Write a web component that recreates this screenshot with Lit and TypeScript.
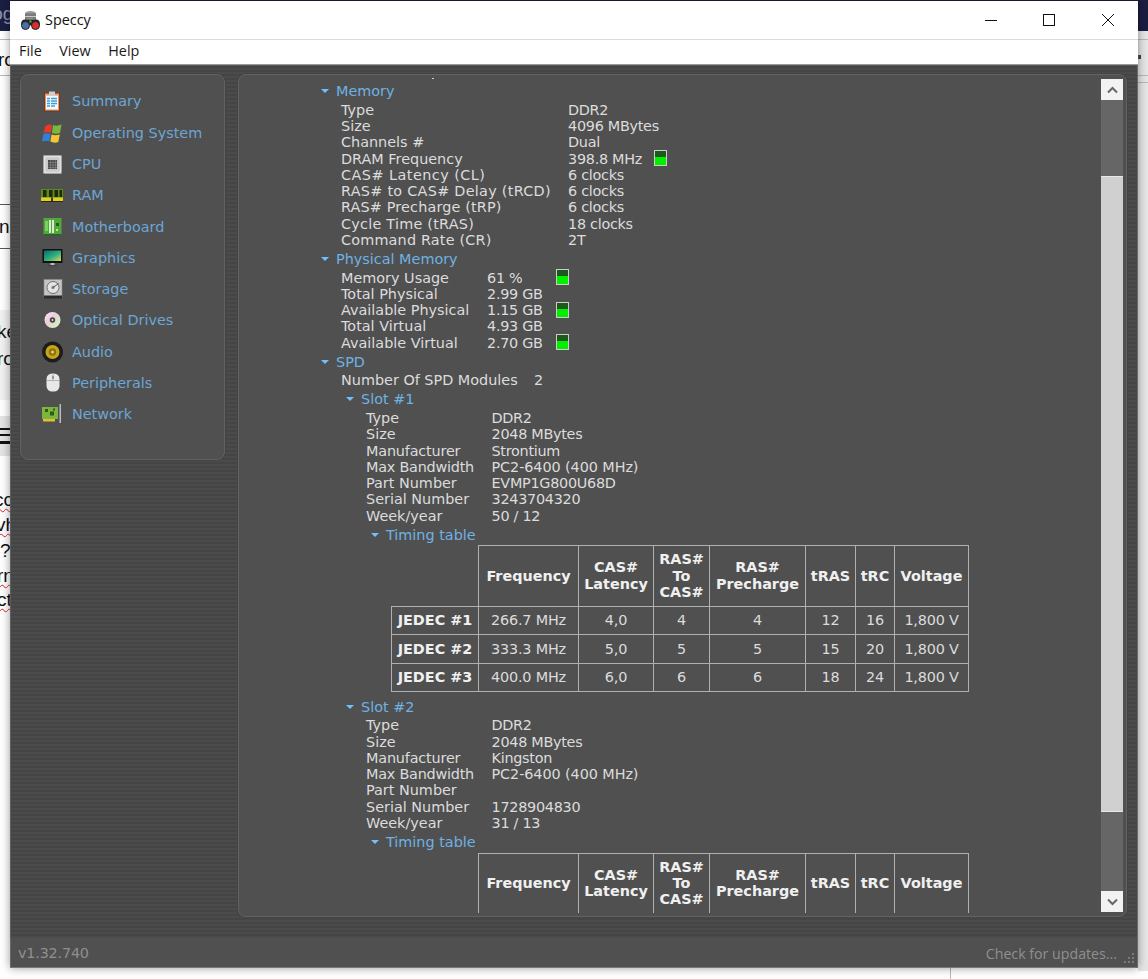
import { LitElement, html, css, svg } from "lit";
import { customElement } from "lit/decorators.js";

const icons: Record<string, unknown> = {
  summary: svg`<rect x="2.500" y="2" width="15" height="18" fill="#e8935a" stroke="#6a3018" stroke-width=".8"/><rect x="4" y="4.500" width="12" height="14" fill="#f4f8fb"/><rect x="7" y="0.500" width="6" height="3.500" fill="#c8d0d6"/><path d="M5 7.500h3M9 7.500h6M5 10h3M9 10h6M5 12.500h3M9 12.500h6M5 15h3M9 15h4" stroke="#39a0e0" stroke-width="1.400"/>`,
  os: svg`<path d="M3 3.500q4-3 7-1.500l-1.200 8q-3.500-1.500-7.300 0z" fill="#e8392a"/><path d="M11 2q4 1.500 8.500-.5l-1.500 8.500q-4 1.500-8 0z" fill="#7ab83a"/><path d="M1.300 11q3.700-1.500 7.200 0l-1.200 7.500q-3.500-1.500-7.300 0z" fill="#2f80d8"/><path d="M9.500 11.500q4 1.500 8.300 0l-1.500 7.500q-4 1.500-8-.5z" fill="#f6c531"/>`,
  cpu: svg`<rect x="1.500" y="1.500" width="18" height="18" fill="#c9c9c9" stroke="#8a8a8a" stroke-width=".8"/><rect x="2.500" y="2.500" width="16" height="16" fill="none" stroke="#f4f4f4" stroke-width="2" stroke-dasharray="1 1"/><rect x="6" y="6" width="9" height="9" fill="#4a4a4a"/><path d="M6 8.500h9M6 11h9M6 13.500h9M8.500 6v9M11 6v9M13.500 6v9" stroke="#8a8a8a" stroke-width=".6"/>`,
  ram: svg`<rect x="-1" y="4" width="22" height="9" fill="#5d8a18"/><rect x="-1" y="12.500" width="22" height="3.500" fill="#e0d020"/><path d="M1 5h3.500v7H1zM7 5h3.500v7H7zM12.500 5H16v7h-3.500zM17.500 5H20v7h-2.500z" fill="#1e2a10"/><rect x="9" y="12.500" width="2" height="3.500" fill="#333"/><rect x="-1" y="16" width="22" height="1" fill="#2a2a10"/>`,
  board: svg`<rect x="1.500" y="1" width="18" height="17" fill="#52a83a"/><rect x="1.500" y="17" width="18" height="1.500" fill="#1f6a22"/><rect x="7" y="3" width="2" height="13" fill="#d8ecd0"/><rect x="10" y="3" width="2" height="13" fill="#d8ecd0"/><rect x="3" y="4" width="3" height="10" fill="#7ccf60"/><rect x="14" y="6" width="3" height="3" fill="#245f22"/><rect x="14" y="12" width="2" height="2" fill="#b8e8a0"/>`,
  gfx: svg`<rect x="0.500" y="1" width="20" height="14" fill="#111"/><defs><linearGradient id="sc" x1="0" y1="0" x2="1" y2="1"><stop offset="0" stop-color="#0a6a70"/><stop offset=".55" stop-color="#30b080"/><stop offset="1" stop-color="#d8d850"/></linearGradient></defs><rect x="2" y="2.500" width="17" height="10.500" fill="url(#sc)"/><rect x="8.500" y="15" width="4" height="2" fill="#bbb"/><rect x="5.500" y="17" width="10" height="1.500" fill="#444"/>`,
  hdd: svg`<rect x="2" y="0.500" width="18" height="18" fill="#c4c4c4" stroke="#8c8c8c" stroke-width=".6"/><circle cx="11" cy="8.500" r="6" fill="#e4e4e4" stroke="#6e6e6e"/><circle cx="11" cy="8.500" r="1.700" fill="#888"/><path d="M11 8.500 16.500 4.500" stroke="#555"/><rect x="2" y="16.500" width="18" height="3" fill="#2c2c2c"/>`,
  cd: svg`<defs><linearGradient id="cdg" x1="0" y1="0" x2="1" y2="1"><stop offset="0" stop-color="#f4f4f4"/><stop offset=".4" stop-color="#eec8e0"/><stop offset=".7" stop-color="#d8e8c0"/><stop offset="1" stop-color="#e8e8e8"/></linearGradient></defs><circle cx="10.500" cy="10" r="8" fill="url(#cdg)"/><circle cx="10.500" cy="10" r="2.700" fill="#444"/><circle cx="10.500" cy="10" r="1" fill="#ddd"/>`,
  audio: svg`<circle cx="10.500" cy="10" r="10.500" fill="#1c1c1c"/><circle cx="10.500" cy="10" r="7" fill="#c9a318"/><circle cx="10.500" cy="10" r="3.700" fill="#8c7210"/><circle cx="10.500" cy="10" r="1.500" fill="#e9d060"/>`,
  mouse: svg`<rect x="4.500" y="0.500" width="13" height="18" rx="5.500" fill="#e8e8e8"/><path d="M11 1v6M4.800 7.500h12.400" stroke="#9a9a9a" stroke-width=".7"/><rect x="10.200" y="3" width="1.600" height="3" fill="#8a8a8a"/>`,
  net: svg`<rect x="0" y="3" width="16" height="12" fill="#7cb63c"/><rect x="3" y="5" width="3" height="3" fill="#2d5a20"/><rect x="8" y="7.500" width="4" height="4" fill="#2d5a20"/><rect x="11" y="4.500" width="2" height="2" fill="#2d5a20"/><rect x="1" y="15" width="12" height="2.500" fill="#e0c030"/><rect x="17.500" y="0" width="1.500" height="19" fill="#bdbdbd"/>`,
};

const NAV: [string, string][] = [
  ["summary", "Summary"], ["os", "Operating System"], ["cpu", "CPU"], ["ram", "RAM"],
  ["board", "Motherboard"], ["gfx", "Graphics"], ["hdd", "Storage"], ["cd", "Optical Drives"],
  ["audio", "Audio"], ["mouse", "Peripherals"], ["net", "Network"],
];

const MEMORY: [string, string, boolean?][] = [
  ["Type", "DDR2"], ["Size", "4096 MBytes"], ["Channels #", "Dual"],
  ["DRAM Frequency", "398.8 MHz", true], ["CAS# Latency (CL)", "6 clocks"],
  ["RAS# to CAS# Delay (tRCD)", "6 clocks"], ["RAS# Precharge (tRP)", "6 clocks"],
  ["Cycle Time (tRAS)", "18 clocks"], ["Command Rate (CR)", "2T"],
];
const PHYS: [string, string, boolean?][] = [
  ["Memory Usage", "61 %", true], ["Total Physical", "2.99 GB"],
  ["Available Physical", "1.15 GB", true], ["Total Virtual", "4.93 GB"],
  ["Available Virtual", "2.70 GB", true],
];
const SLOT1: [string, string][] = [
  ["Type", "DDR2"], ["Size", "2048 MBytes"], ["Manufacturer", "Strontium"],
  ["Max Bandwidth", "PC2-6400 (400 MHz)"], ["Part Number", "EVMP1G800U68D"],
  ["Serial Number", "3243704320"], ["Week/year", "50 / 12"],
];
const SLOT2: [string, string][] = [
  ["Type", "DDR2"], ["Size", "2048 MBytes"], ["Manufacturer", "Kingston"],
  ["Max Bandwidth", "PC2-6400 (400 MHz)"], ["Part Number", ""],
  ["Serial Number", "1728904830"], ["Week/year", "31 / 13"],
];
const JEDEC = [
  ["JEDEC #1", "266.7 MHz", "4,0", "4", "4", "12", "16", "1,800 V"],
  ["JEDEC #2", "333.3 MHz", "5,0", "5", "5", "15", "20", "1,800 V"],
  ["JEDEC #3", "400.0 MHz", "6,0", "6", "6", "18", "24", "1,800 V"],
];
/* per-string tracking, measured against the reference's text widths */
const TRACK: Record<string, number> = {
  "CAS# Latency (CL)": 0.47, "RAS# to CAS# Delay (tRCD)": 0.28, "RAS# Precharge (tRP)": 0.15,
  "Cycle Time (tRAS)": 0.24, "Command Rate (CR)": 0.18, "Max Bandwidth": -0.23, Manufacturer: -0.17,
  "PC2-6400 (400 MHz)": -0.08,
};
const track = (s: string) => (TRACK[s] ? `letter-spacing:${TRACK[s]}px` : "");

@customElement("app-root")
export class AppRoot extends LitElement {
  static styles = css`
    :host { display: block; position: relative; width: 1148px; height: 979px; overflow: hidden; background: #fff; font-family: "DejaVu Sans", Verdana, sans-serif; }
    .bg { position: absolute; font-family: "Liberation Sans", Arial, sans-serif; font-size: 19px; line-height: 20px; color: #111; white-space: nowrap; }
    .navy { background: #1c1e42; height: 31px; top: 0; }
    .band { background: #f1f1f1; left: 0; width: 10px; }
    .rule { background: #b9b9b9; height: 1px; }
    .rule.dark { background: #555; }
    .wavy { text-decoration: underline wavy #e02020 1px; text-underline-offset: 2px; }

    .win { position: absolute; left: 10px; top: 1px; width: 1128px; height: 967px; display: flex; flex-direction: column; box-shadow: 0 0 9px rgba(0,0,0,.4); background: #4a4a4a; }
    .title { height: 38px; flex: none; background: #fff; display: flex; align-items: center; padding-left: 10px; font-family: "Open Sans", sans-serif; font-size: 14.4px; color: #111; }
    .title .logo { width: 21px; height: 21px; margin-right: 4px; }
    .title .name { margin-top: -2px; }
    .grow { flex: 1; }
    .ctls { display: flex; margin-right: 1px; }
    .ctl { width: 58.5px; height: 38px; display: flex; align-items: center; justify-content: center; margin-top: -1px; }
    .menu { flex: none; background: #fff; border-top: 1px solid #dcdcdc; display: flex; align-items: center; padding: 0 0 3px 9px; box-sizing: content-box; height: 21px; font-family: "Open Sans", sans-serif; font-size: 14.4px; color: #1a1a1a; box-shadow: 0 1px 1px #999; z-index: 1; }
    .menu span { margin-right: 17.5px; }

    .body { flex: 1; min-height: 0; display: flex; align-items: flex-start; gap: 13px; padding: 10px 11px 0 10px; background: repeating-linear-gradient(180deg, #4b4b4b 0 2px, #454545 2px 4px); box-shadow: inset 1px 0 #5e5e5e, inset -1px 0 #6a6a6a; }
    .panel { background: #505050; border: 1px solid #626262; border-radius: 8px; box-shadow: 0 0 0 1px #444; box-sizing: border-box; }
    .side { width: 205px; height: 386px; flex: none; padding: 10.7px 0 0 21px; }
    .nav { display: flex; align-items: center; height: 31.3px; gap: 10px; color: #6ca6d4; font-size: 14.4px; }
    .nav svg { width: 20px; height: 20px; flex: none; overflow: visible; }

    .main { flex: 1; min-width: 0; height: 843px; display: flex; position: relative; }
    .content { flex: 1; min-width: 0; height: 838px; overflow: hidden; padding: 5.4px 0 0 82px; box-sizing: border-box; color: #dcdcdc; font-size: 14.4px; line-height: 16.25px; position: relative; }
    .speck { position: absolute; left: 193px; top: 3px; width: 2px; height: 1px; background: #ccc; }
    .hd { display: flex; align-items: center; height: 21.5px; color: #6fb2e2; white-space: nowrap; }
    .hd::before { content: ""; width: 0; height: 0; border-left: 4.5px solid transparent; border-right: 4.5px solid transparent; border-top: 4px solid #6fc0ff; margin-right: 7px; }
    .kids { padding-left: 20px; }
    .sub { margin-left: 5px; }
    .kv { display: grid; align-items: center; white-space: nowrap; }
    .kv > * { height: 16.25px; }
    .val { letter-spacing: -0.28px; }
    .w-mem { grid-template-columns: 227px 86px auto; }
    .w-phys { grid-template-columns: 146px 69px auto; }
    .w-spd { grid-template-columns: 193px auto; }
    .w-slot { grid-template-columns: 125.500px auto; }
    .meter { width: 13px; height: 16px !important; box-sizing: border-box; border: 1px solid #ccc; background: linear-gradient(180deg, #1c5a1c 0 40%, #00f000 40%); margin-top: -1px; display: block; }

    table { border-collapse: collapse; table-layout: fixed; width: 577px; margin-bottom: 3.5px; }
    td, th { border: 1px solid #b0b0b0; text-align: center; padding: 0; font-size: 14.4px; line-height: 16.250px; height: 28.5px; box-sizing: border-box; color: #dcdcdc; }
    td { letter-spacing: -0.2px; }
    th { font-weight: 700; color: #f0f0f0; }
    thead th { height: 60.6px; padding-bottom: 1px; }
    th.blank { border: none; border-right: 1px solid #b0b0b0; border-bottom: 1px solid #b0b0b0; }
    tbody th, tbody td { padding-bottom: 1px; }
    .c0 { width: 87px; } .c1 { width: 100px; } .c2 { width: 75px; } .c3 { width: 56px; }
    .c4 { width: 96px; } .c5 { width: 50px; } .c6 { width: 39px; } .c7 { width: 74px; }

    .sb { width: 22px; flex: none; margin: 4px 3px 0 0; height: 833px; background: #666; display: flex; flex-direction: column; }
    .sb-btn { height: 21px; flex: none; background: #f2f2f2; display: flex; align-items: center; justify-content: center; }
    .sb-btn svg { width: 11px; height: 8px; }
    .thumb { height: 636px; flex: none; background: #d0d0d0; margin-top: 76px; border-top: 1px solid #e8e8e8; border-bottom: 1px solid #e8e8e8; box-sizing: border-box; }

    .status { height: 30px; flex: none; background: #505050; display: flex; align-items: center; justify-content: space-between; padding: 0 21px 0 8px; color: #8f8f8f; font-size: 14.4px; letter-spacing: -0.2px; position: relative; box-shadow: inset 1px 0 #6a6a6a, inset -1px 0 #6a6a6a, inset 0 -1px #777; }
    .status .upd { font-family: "Open Sans", sans-serif; font-size: 14.2px; letter-spacing: 0; }
    .grip { position: absolute; right: 2px; bottom: 2px; width: 14px; height: 14px; }
  `;

  private kv(rows: [string, string, boolean?][], cls: string) {
    return html`<div class="kv ${cls}">${rows.map(
      ([k, v, m]) => html`<span style=${track(k)}>${k}</span><span class="val" style=${track(v)}>${v}</span>${cls === "w-mem" || cls === "w-phys" ? (m ? html`<i class="meter"></i>` : html`<span></span>`) : ""}`
    )}</div>`;
  }

  private table(withBody: boolean) {
    return html`<table>
      <colgroup>${[0, 1, 2, 3, 4, 5, 6, 7].map((i) => html`<col class="c${i}" />`)}</colgroup>
      <thead><tr>
        <th class="blank"></th><th>Frequency</th><th>CAS#<br />Latency</th><th>RAS#<br />To<br />CAS#</th>
        <th>RAS#<br />Precharge</th><th>tRAS</th><th>tRC</th><th>Voltage</th>
      </tr></thead>
      <tbody>${(withBody ? JEDEC : []).map(
        (r) => html`<tr><th>${r[0]}</th>${r.slice(1).map((c) => html`<td>${c}</td>`)}</tr>`
      )}${withBody ? "" : html`<tr><th></th><td></td><td></td><td></td><td></td><td></td><td></td><td></td></tr>`}</tbody>
    </table>`;
  }

  private slot(name: string, rows: [string, string][], withBody: boolean) {
    return html`<div class="sub">
      <div class="hd">${name}</div>
      <div class="kids">
        ${this.kv(rows, "w-slot")}
        <div class="sub">
          <div class="hd">Timing table</div>
          <div class="kids">${this.table(withBody)}</div>
        </div>
      </div>
    </div>`;
  }

  render() {
    return html`
      <div class="bg navy" style="left:0;width:10px"></div>
      <div class="bg navy" style="left:1138px;width:10px"></div>
      <div class="bg" style="left:0;top:0;width:1148px;height:1px;background:#1c1e42"></div>
      <div class="bg" style="left:-12px;top:4px;color:#8d93b8">log</div>
      <div class="bg rule" style="left:0;top:39px;width:10px"></div>
      <div class="bg rule" style="left:0;top:75px;width:10px"></div>
      <div class="bg" style="left:-2px;top:50px">ro</div>
      <div class="bg rule dark" style="left:0;top:204px;width:10px"></div>
      <div class="bg" style="left:-1px;top:217px">n</div>
      <div class="bg rule dark" style="left:0;top:248px;width:10px"></div>
      <div class="bg band" style="top:310px;height:90px"></div>
      <div class="bg" style="left:-3px;top:322px">ke</div>
      <div class="bg" style="left:-3px;top:349px">ro</div>
      <div class="bg band" style="top:416px;height:40px;background:#e4e4e4"></div>
      <div class="bg" style="left:0;top:428px;width:10px;height:2px;background:#111"></div>
      <div class="bg" style="left:0;top:434px;width:10px;height:2px;background:#111"></div>
      <div class="bg" style="left:0;top:441px;width:10px;height:3px;background:#111"></div>
      <div class="bg" style="left:-6px;top:490px"><span class="wavy">cc</span></div>
      <div class="bg" style="left:-4px;top:515px"><span class="wavy">vh</span></div>
      <div class="bg" style="left:0;top:541px">?</div>
      <div class="bg" style="left:-3px;top:566px"><span class="wavy">rn</span></div>
      <div class="bg" style="left:-3px;top:590px"><span class="wavy">ct</span></div>
      <div class="bg" style="left:1138px;top:31px;width:10px;height:940px;background:#e6e6e6"></div>
      <div class="bg rule" style="left:1138px;top:39px;width:10px"></div>
      <div class="bg rule" style="left:1138px;top:75px;width:10px"></div>
      <div class="bg rule" style="left:1138px;top:82px;width:10px"></div>
      <div class="bg" style="left:1138px;top:55px;width:3px;height:4px;background:#444"></div>
      <div class="bg rule" style="left:950px;top:968px;width:1px;height:11px"></div>

      <div class="win">
        <div class="title">
          <svg class="logo" viewBox="0 0 21 20"><ellipse cx="10.500" cy="3" rx="5.500" ry="2.500" fill="#9a9a9a"/><rect x="5" y="3" width="11" height="7" fill="#7a7a7a"/><path d="M5 6h11" stroke="#ccc"/><ellipse cx="10.500" cy="10" rx="5.500" ry="2" fill="#bbb"/><path d="M1 14q0-5 4-5h11q4 0 4 5v1H1z" fill="#222"/><circle cx="5.500" cy="15" r="4" fill="#4a6fa8" stroke="#222"/><circle cx="15.500" cy="15" r="4" fill="#d83030" stroke="#222"/><rect x="9.500" y="10" width="2" height="2" fill="#40d040"/></svg>
          <span class="name">Speccy</span><span class="grow"></span>
          <div class="ctls">
            <div class="ctl"><svg width="12" height="12" viewBox="0 0 12 12"><path d="M0 6.500h12" stroke="#111"/></svg></div>
            <div class="ctl"><svg width="12" height="12" viewBox="0 0 12 12"><rect x=".5" y=".5" width="11" height="11" fill="none" stroke="#111"/></svg></div>
            <div class="ctl"><svg width="12" height="12" viewBox="0 0 12 12"><path d="M0 0l12 12M12 0L0 12" stroke="#111"/></svg></div>
          </div>
        </div>
        <div class="menu"><span>File</span><span>View</span><span>Help</span></div>
        <div class="body">
          <div class="panel side">
            ${NAV.map(([i, t]) => html`<div class="nav"><svg viewBox="0 0 20 20">${icons[i]}</svg><span>${t}</span></div>`)}
          </div>
          <div class="panel main">
            <div class="content">
              <i class="speck"></i>
              <div class="hd">Memory</div>
              <div class="kids">${this.kv(MEMORY, "w-mem")}</div>
              <div class="hd">Physical Memory</div>
              <div class="kids">${this.kv(PHYS, "w-phys")}</div>
              <div class="hd">SPD</div>
              <div class="kids">
                <div class="kv w-spd"><span>Number Of SPD Modules</span><span>2</span></div>
                ${this.slot("Slot #1", SLOT1, true)}
                ${this.slot("Slot #2", SLOT2, false)}
              </div>
            </div>
            <div class="sb">
              <div class="sb-btn"><svg viewBox="0 0 11 8"><path d="M1 6.500l4.500-4.500 4.500 4.500" fill="none" stroke="#666" stroke-width="2"/></svg></div>
              <div class="thumb"></div>
              <div class="grow"></div>
              <div class="sb-btn"><svg viewBox="0 0 11 8"><path d="M1 1.500l4.500 4.500 4.500-4.500" fill="none" stroke="#666" stroke-width="2"/></svg></div>
            </div>
          </div>
        </div>
        <div class="status">
          <span>v1.32.740</span><span class="upd">Check for updates...</span>
          <svg class="grip" viewBox="0 0 14 14" fill="#7a7a7a"><rect x="10" y="1" width="2" height="2"/><rect x="6" y="5" width="2" height="2"/><rect x="10" y="5" width="2" height="2"/><rect x="2" y="9" width="2" height="2"/><rect x="6" y="9" width="2" height="2"/><rect x="10" y="9" width="2" height="2"/></svg>
        </div>
      </div>`;
  }
}
